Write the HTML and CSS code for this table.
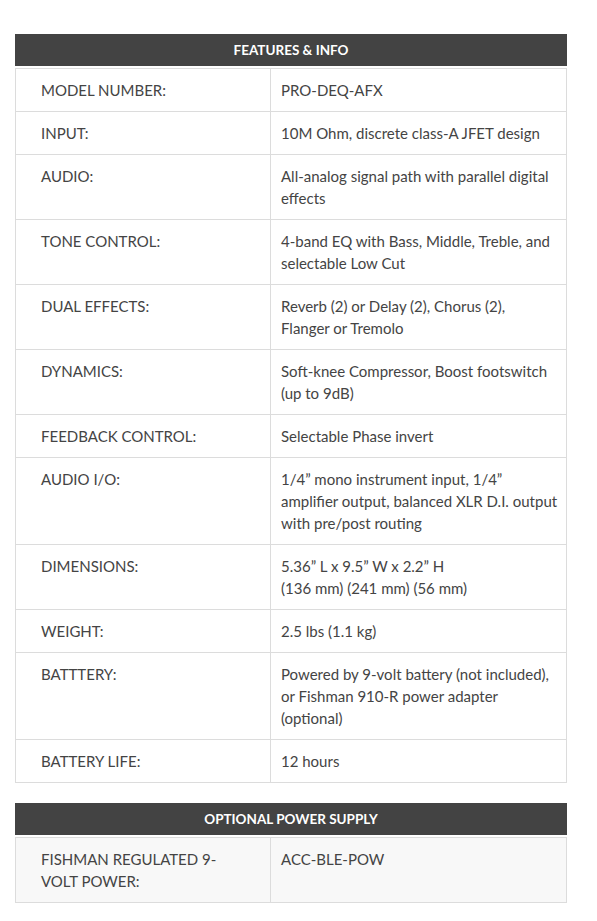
FILE: index.html
```html
<!DOCTYPE html>
<html>
<head>
<meta charset="utf-8">
<link rel="stylesheet" href="styles.css">
</head>
<body>
<div class="page">
  <section class="spec">
    <h2 class="spec-head">FEATURES &amp; INFO</h2>
    <table class="spec-table">
      <tr><td class="k">MODEL NUMBER:</td><td class="v">PRO-DEQ-AFX</td></tr>
      <tr><td class="k">INPUT:</td><td class="v">10M Ohm, discrete class-A JFET design</td></tr>
      <tr><td class="k">AUDIO:</td><td class="v">All-analog signal path with parallel digital effects</td></tr>
      <tr><td class="k">TONE CONTROL:</td><td class="v">4-band EQ with Bass, Middle, Treble, and selectable Low Cut</td></tr>
      <tr><td class="k">DUAL EFFECTS:</td><td class="v">Reverb (2) or Delay (2), Chorus (2), Flanger&nbsp;or Tremolo</td></tr>
      <tr><td class="k">DYNAMICS:</td><td class="v">Soft-knee Compressor, Boost footswitch (up to 9dB)</td></tr>
      <tr><td class="k">FEEDBACK CONTROL:</td><td class="v">Selectable Phase invert</td></tr>
      <tr><td class="k">AUDIO I/O:</td><td class="v">1/4” mono instrument input, 1/4” amplifier output, balanced XLR D.I. output with pre/post routing</td></tr>
      <tr><td class="k">DIMENSIONS:</td><td class="v">5.36” L x 9.5” W x 2.2” H<br>(136 mm) (241 mm) (56 mm)</td></tr>
      <tr><td class="k">WEIGHT:</td><td class="v">2.5 lbs (1.1 kg)</td></tr>
      <tr><td class="k">BATTTERY:</td><td class="v">Powered by 9-volt battery (not included), or Fishman 910-R power adapter (optional)</td></tr>
      <tr><td class="k">BATTERY LIFE:</td><td class="v">12 hours</td></tr>
    </table>
  </section>
  <section class="spec">
    <h2 class="spec-head">OPTIONAL POWER SUPPLY</h2>
    <table class="spec-table alt">
      <tr><td class="k">FISHMAN REGULATED 9-VOLT POWER:</td><td class="v">ACC-BLE-POW</td></tr>
    </table>
  </section>
</div>
</body>
</html>
```
FILE: styles.css
```css
html, body {
  margin: 0;
  padding: 0;
  background: #fff;
}
body {
  font-family: Lato, "Open Sans", sans-serif;
  color: #444;
}
.page {
  padding: 34px 30px 0 15px;
  display: flex;
  flex-direction: column;
  gap: 20px;
}
.spec-head {
  margin: 0 0 2px 0;
  background: #434343;
  color: #fff;
  font-size: 13.5px;
  font-weight: 700;
  height: 32px;
  line-height: 32px;
  text-align: center;
}
.spec-table {
  width: 552px;
  border-collapse: collapse;
  font-size: 15px;
  line-height: 22px;
}
.spec-table td {
  border: 1px solid #dcdcdc;
  vertical-align: top;
  padding: 10px 4px 10px 10px;
}
.spec-table td.k {
  width: 204px;
  padding-left: 25px;
  padding-right: 25px;
}
.spec-table.alt td {
  background: #f8f8f8;
}
```
